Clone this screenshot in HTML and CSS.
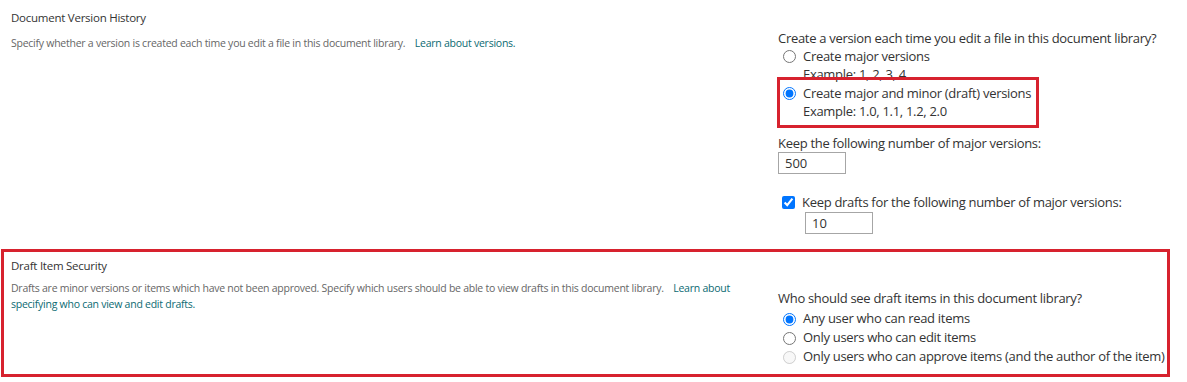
FILE: index.html
```html
<!DOCTYPE html>
<html lang="en">
<head>
<meta charset="utf-8">
<title>Versioning settings</title>
<link rel="stylesheet" href="styles.css">
</head>
<body>
<div class="page">
  <section class="row first">
    <div class="left">
      <h2 class="title">Document Version History</h2>
      <p class="desc">Specify whether a version is created each time you edit a file in this document library. <a class="link" href="#">Learn about versions.</a></p>
    </div>
    <div class="right r1">
      <div class="question">Create a version each time you edit a file in this document library?</div>
      <label class="opt">
        <input type="radio" name="ver">
        <span class="opt-text">Create major versions<br>Example: 1, 2, 3, 4</span>
      </label>
      <label class="opt highlight">
        <input type="radio" name="ver" checked>
        <span class="opt-text">Create major and minor (draft) versions<br>Example: 1.0, 1.1, 1.2, 2.0</span>
      </label>
      <div class="field">
        <div class="field-label">Keep the following number of major versions:</div>
        <input class="num" type="text" value="500">
      </div>
      <div class="field drafts">
        <label class="chk"><input type="checkbox" checked><span>Keep drafts for the following number of major versions:</span></label>
        <input class="num indent" type="text" value="10">
      </div>
    </div>
  </section>
  <section class="row second">
    <div class="left">
      <h2 class="title">Draft Item Security</h2>
      <p class="desc">Drafts are minor versions or items which have not been approved. Specify which users should be able to view drafts in this document library. <a class="link" href="#">Learn about</a> <a class="link cont" href="#">specifying who can view and edit drafts.</a></p>
    </div>
    <div class="right r2">
      <div class="question">Who should see draft items in this document library?</div>
      <label class="opt single"><input type="radio" name="draft" checked><span class="opt-text">Any user who can read items</span></label>
      <label class="opt single"><input type="radio" name="draft"><span class="opt-text">Only users who can edit items</span></label>
      <label class="opt single disabled"><input type="radio" name="draft" disabled><span class="opt-text">Only users who can approve items (and the author of the item)</span></label>
    </div>
  </section>
</div>
</body>
</html>
```
FILE: styles.css
```css
html, body {
  margin: 0;
  padding: 0;
  background: #fff;
}
.page {
  font-family: "Open Sans", "Noto Sans", sans-serif;
  color: #333;
}
.row {
  display: flex;
}
.first {
  padding-left: 11px;
  height: 249px;
}
.second {
  box-sizing: border-box;
  margin-left: 1px;
  width: 1169px;
  height: 128px;
  border: 3px solid #d7222e;
  padding-left: 7px;
}
.left {
  width: 726px;
  flex: none;
}
.title {
  margin: 0;
  font-size: 11.5px;
  letter-spacing: -0.25px;
  font-weight: 400;
  color: #333;
  line-height: 16px;
}
.first .title { padding-top: 10px; }
.second .title { padding-top: 6px; }
.desc {
  margin: 6px 0 0;
  font-size: 10.5px;
  letter-spacing: -0.25px;
  line-height: 16px;
  color: #666;
}
.first .desc { margin-top: 9px; }
.link {
  color: #0b6a72;
  text-decoration: none;
  margin-left: 7px;
}
.link.cont { margin-left: 0; }
.right {
  margin-left: 41px;
  font-size: 13px;
  letter-spacing: -0.3px;
  line-height: 18px;
  white-space: nowrap;
}
.r1 { padding-top: 29px; }
.r2 { padding-top: 37px; }
.r2 .question { margin-bottom: 2px; }
.question { color: #333; }
.opt {
  display: flex;
  align-items: flex-start;
  color: #333;
}
.opt input {
  margin: 3px 7px 0 5px;
  width: 13px;
  height: 13px;
  flex: none;
}
.opt.single { line-height: 19px; }
.opt.single input { margin-top: 4px; }
.highlight {
  position: relative;
  margin-top: 1px;
}
.highlight::after {
  content: "";
  position: absolute;
  top: -7px;
  bottom: -8px;
  left: -1px;
  width: 262px;
  box-sizing: border-box;
  border: 3px solid #d7222e;
  pointer-events: none;
}
.field { margin-top: 14px; }
.field-label { color: #333; }
.num {
  display: block;
  box-sizing: border-box;
  width: 68px;
  height: 22px;
  border: 1px solid #a6a6a6;
  padding: 0 6px;
  font: inherit;
  font-size: 13px;
  color: #333;
  margin: 0;
  outline: none;
}
.drafts { margin-top: 19px; }
.chk {
  display: flex;
  align-items: flex-start;
  margin-bottom: 1px;
}
.chk input {
  margin: 3px 7px 0 4px;
  width: 13px;
  height: 13px;
}
.indent { margin-left: 27px; }
```
